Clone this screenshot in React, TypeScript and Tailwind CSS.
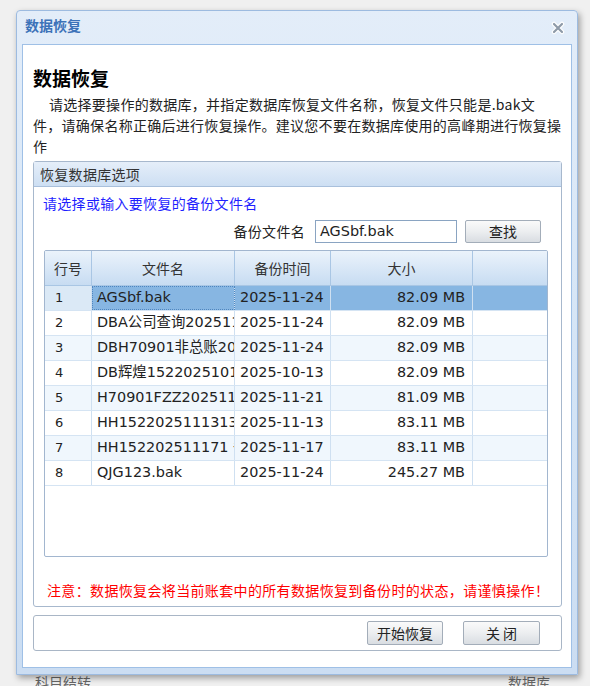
import React from "react";

const rows: [string, string, string, string][] = [
  ["1", "AGSbf.bak", "2025-11-24", "82.09 MB"],
  ["2", "DBA公司查询20251124.bak", "2025-11-24", "82.09 MB"],
  ["3", "DBH70901非总账20251124.bak", "2025-11-24", "82.09 MB"],
  ["4", "DB辉煌152202510131.bak", "2025-10-13", "82.09 MB"],
  ["5", "H70901FZZ20251121.bak", "2025-11-21", "81.09 MB"],
  ["6", "HH1522025111313.bak", "2025-11-13", "83.11 MB"],
  ["7", "HH152202511171 备份.bak", "2025-11-17", "83.11 MB"],
  ["8", "QJG123.bak", "2025-11-24", "245.27 MB"],
];

function CloseIcon() {
  return (
    <svg width="14" height="14" viewBox="0 0 14 14">
      <path d="M3 3 L11 11 M11 3 L3 11" stroke="#ffffff" strokeWidth="4.5" strokeLinecap="round" />
      <path d="M3 3 L11 11 M11 3 L3 11" stroke="#8e9aa8" strokeWidth="2.2" strokeLinecap="round" />
    </svg>
  );
}

export default function App() {
  return (
    <div className="relative w-[590px] h-[686px] overflow-hidden bg-[#f0f0f0] font-['Noto_Sans_CJK_SC',sans-serif]">
      {/* underlying page text, mostly hidden by the dialog */}
      <div className="absolute left-[35px] top-[672px] text-[14px] text-[#666]">科目结转</div>
      <div className="absolute left-[508px] top-[672px] text-[14px] text-[#666]">数据库</div>

      {/* dialog window */}
      <div className="absolute left-[16px] top-[10px] w-[562px] h-[665px] flex flex-col rounded-t-[4px] border border-[#9dbbe0] bg-gradient-to-b from-[#e3edf9] via-[#d5e5f6] to-[#cbddf2] shadow-[2px_3px_6px_rgba(0,0,0,0.35)]">
        <div className="h-[33px] flex items-center justify-between pl-[8px] pr-[12px] pb-[4px]">
          <span className="text-[14px] font-bold text-[#3c72b8]">数据恢复</span>
          <span className="mt-[5px]">
            <CloseIcon />
          </span>
        </div>
        <div className="flex-1 mx-[5px] mb-[6px] border border-[#9fc0e6] bg-white flex flex-col px-[10px] pt-[19px] pb-[16px]">
          <h1 className="text-[19px] leading-[28px] font-bold text-black">数据恢复</h1>
          <p className="mt-[2px] w-[535px] text-[14px] leading-[21px] tracking-[0.28px] text-[#222] whitespace-nowrap">
            <span className="pl-[16px]">请选择要操作的数据库，并指定数据库恢复文件名称，恢复文件只能是.bak文</span>
            <br />
            件，请确保名称正确后进行恢复操作。建议您不要在数据库使用的高峰期进行恢复操
            <br />
            作
          </p>

          {/* options group */}
          <div className="mt-[4px] w-[529px] border border-[#a7b8cd] rounded-[3px] flex flex-col pb-[6px]">
            <div className="h-[25px] flex items-center pl-[6px] bg-gradient-to-b from-[#e5eef9] to-[#cddff3] border-b border-[#a9c0dc] text-[14px] tracking-[0.3px] text-[#333]">
              恢复数据库选项
            </div>
            <div className="mt-[6px] pl-[9px] text-[14px] leading-[20px] tracking-[0.3px] text-[#1f1fff]">请选择或输入要恢复的备份文件名</div>
            <div className="mt-[7px] flex items-center justify-end pr-[20px]">
              <span className="text-[14px] tracking-[0.3px] text-[#222]">备份文件名</span>
              <div className="ml-[10px] w-[142px] h-[23px] border border-[#8aa4c2] flex items-center pl-[4px] font-['DejaVu_Sans','Noto_Sans_CJK_SC',sans-serif] text-[14.4px] text-[#222]">
                AGSbf.bak
              </div>
              <button className="ml-[8px] w-[76px] h-[23px] border border-[#a3adb9] rounded-[2px] bg-gradient-to-b from-[#fafafa] via-[#eceef0] to-[#d9dde2] text-[14px] text-[#222]">
                查找
              </button>
            </div>

            {/* grid */}
            <div className="mt-[7px] ml-[10px] w-[504px] h-[307px] border border-[#a2b6cf] rounded-[2px] bg-white overflow-hidden flex flex-col">
              <div className="h-[35px] shrink-0 grid grid-cols-[47px_143px_96px_142px_1fr] bg-gradient-to-b from-[#ebf3fb] to-[#c7dcf2] border-b border-[#a9c6e4] text-[14px] text-[#333]">
                <div className="flex items-center justify-center border-r border-[#a9c6e4]">行号</div>
                <div className="flex items-center justify-center border-r border-[#a9c6e4]">文件名</div>
                <div className="flex items-center justify-center border-r border-[#a9c6e4]">备份时间</div>
                <div className="flex items-center justify-center border-r border-[#a9c6e4]">大小</div>
                <div />
              </div>
              {rows.map((r, i) => {
                const sel = i === 0;
                const stripe = i % 2 === 0 ? "bg-[#f0f7fd]" : "bg-white";
                const cellBg = sel ? "bg-[#87b6e2]" : stripe;
                return (
                  <div
                    key={r[0]}
                    className="h-[25px] shrink-0 grid grid-cols-[47px_143px_96px_142px_1fr] border-b border-[#d5e4f3] font-['DejaVu_Sans','Noto_Sans_CJK_SC',sans-serif] text-[14.4px] text-[#222]"
                  >
                    <div className={`flex items-center pl-[10px] text-[13px] border-r border-[#cfe0f1] ${sel ? "bg-[#dbe9f6]" : stripe}`}>
                      {r[0]}
                    </div>
                    <div
                      className={`flex items-center pl-[5px] overflow-hidden whitespace-nowrap border-r border-[#cfe0f1] ${cellBg} ${
                        sel ? "outline-1 outline-dotted outline-[#4f86c0] -outline-offset-1" : ""
                      }`}
                    >
                      {r[1]}
                    </div>
                    <div className={`flex items-center pl-[5px] overflow-hidden whitespace-nowrap border-r border-[#cfe0f1] ${cellBg}`}>
                      {r[2]}
                    </div>
                    <div className={`flex items-center justify-end pr-[7px] whitespace-nowrap border-r border-[#cfe0f1] ${cellBg}`}>
                      {r[3]}
                    </div>
                    <div className={cellBg} />
                  </div>
                );
              })}
            </div>

            <div className="mt-[23px] pl-[13px] text-[14px] leading-[20px] tracking-[0.35px] text-[#ff0000]">
              注意：数据恢复会将当前账套中的所有数据恢复到备份时的状态，请谨慎操作！
            </div>
          </div>

          {/* button bar */}
          <div className="mt-[8px] w-[529px] h-[36px] border border-[#a9b6c6] rounded-[3px] flex items-center justify-end pr-[21px] gap-[20px]">
            <button className="w-[76px] h-[24px] border border-[#a3adb9] rounded-[2px] bg-gradient-to-b from-[#fafafa] via-[#eceef0] to-[#d9dde2] text-[14px] text-[#222]">
              开始恢复
            </button>
            <button className="w-[77px] h-[24px] border border-[#a3adb9] rounded-[2px] bg-gradient-to-b from-[#fafafa] via-[#eceef0] to-[#d9dde2] text-[14px] text-[#222]">
              关 闭
            </button>
          </div>
        </div>
      </div>
    </div>
  );
}
